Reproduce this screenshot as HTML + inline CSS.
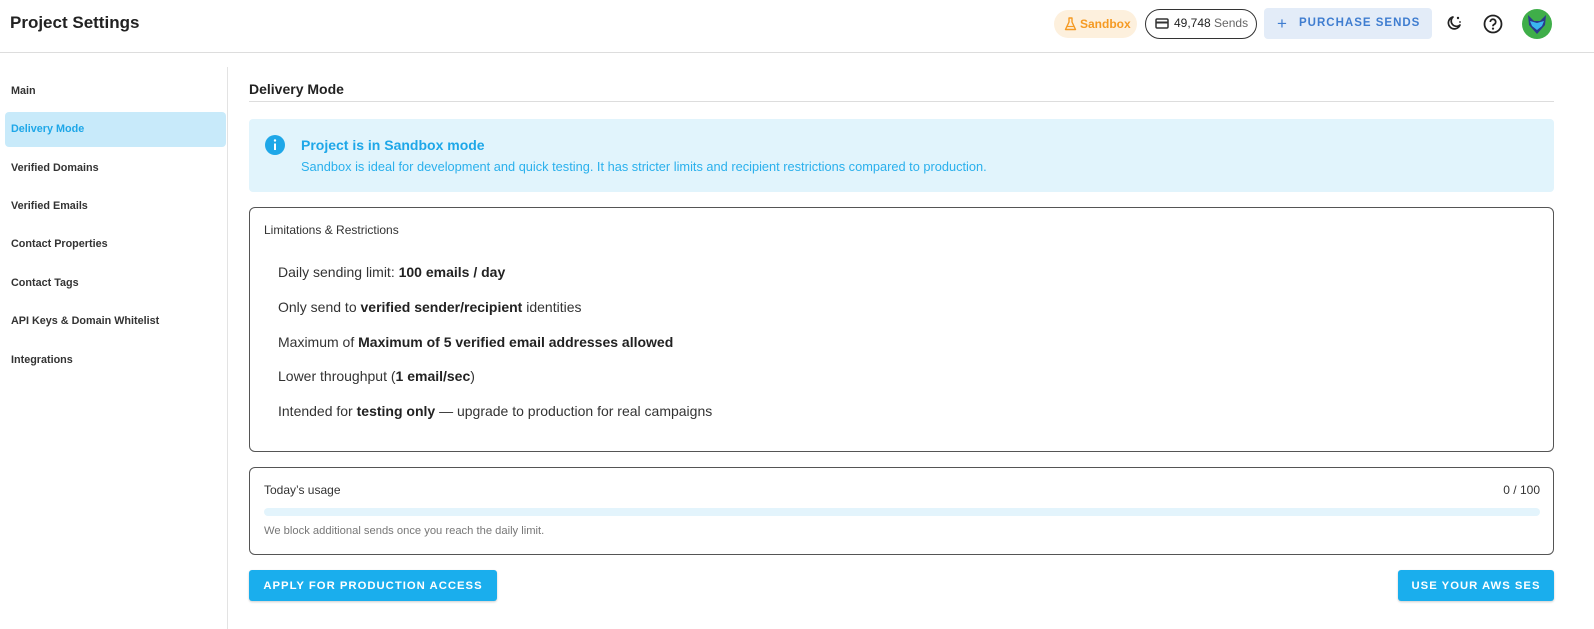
<!DOCTYPE html>
<html><head><meta charset="utf-8"><style>
*{margin:0;padding:0;box-sizing:border-box}
body{width:1594px;height:629px;background:#fff;font-family:"Liberation Sans",sans-serif;color:#222;position:relative;overflow:hidden}
.a{position:absolute;white-space:nowrap}
.side{font-size:10.8px;font-weight:bold;color:#333;left:11px}
.li{left:278px;font-size:14px;color:#333}
.li b{color:#222}
.btn{background:#1aaeed;color:#fff;font-size:11.3px;font-weight:bold;letter-spacing:1px;border-radius:3px;display:flex;align-items:center;justify-content:center;box-shadow:0 1px 2px rgba(0,0,0,.2)}
</style></head><body>
<div class="a" style="left:10px;top:13px;font-size:17px;font-weight:bold;color:#222">Project Settings</div>
<div class="a" style="left:0;top:52px;width:1594px;height:1px;background:#ddd"></div>

<div class="a" style="left:1054px;top:10px;width:83px;height:28px;background:#fdf0dd;border-radius:14px;color:#f59a23;font-size:12px;font-weight:bold;padding-left:26px;line-height:28px">Sandbox
<svg style="position:absolute;left:10px;top:7px" width="13" height="14" viewBox="0 0 13 14"><path d="M4.5 1h4M5 1v4L1.5 12.5h10L8 5V1" fill="none" stroke="#f59a23" stroke-width="1.4" stroke-linejoin="round"/><path d="M3 9.5h7" stroke="#f59a23" stroke-width="1.2"/></svg></div>
<div class="a" style="left:1145px;top:9px;width:112px;height:30px;border:1.5px solid #333;border-radius:15px;font-size:12px;line-height:27px;padding-left:28px;color:#222">49,748 <span style="color:#666">Sends</span>
<svg style="position:absolute;left:9px;top:8px" width="14" height="11" viewBox="0 0 14 11"><rect x="1" y="1" width="12" height="9" rx="1.2" fill="none" stroke="#333" stroke-width="1.5"/><rect x="1" y="3.5" width="12" height="2" fill="#333"/></svg></div>
<div class="a" style="left:1264px;top:8px;width:168px;height:31px;background:#e3ecf8;border-radius:4px;color:#3f7dd0;font-size:11.5px;font-weight:bold;letter-spacing:1px;line-height:31px;padding-left:35px">PURCHASE SENDS
<span style="position:absolute;left:13px;top:0;font-size:17px;font-weight:normal">+</span></div>
<svg class="a" style="left:1445px;top:14px" width="18" height="18" viewBox="0 0 18 18"><path d="M8 3a6 6 0 1 0 7 8 5 5 0 0 1-7-8z" fill="none" stroke="#222" stroke-width="1.7" stroke-linejoin="round"/><circle cx="13" cy="4" r="1.2" fill="#222"/><circle cx="15" cy="8" r="0.9" fill="#222"/></svg>
<svg class="a" style="left:1483px;top:14px" width="20" height="20" viewBox="0 0 20 20"><circle cx="10" cy="10" r="8.5" fill="none" stroke="#222" stroke-width="1.8"/><path d="M7.3 8a2.7 2.7 0 1 1 3.8 2.4c-.8.4-1.1.9-1.1 1.8" fill="none" stroke="#222" stroke-width="1.8"/><circle cx="10" cy="14.6" r="1.1" fill="#222"/></svg>
<svg class="a" style="left:1522px;top:9px" width="30" height="30" viewBox="0 0 30 30"><circle cx="15" cy="15" r="15" fill="#3fae49"/><path d="M6 6l6 6h6l6-6-1 10-8 9-8-9z" fill="#2a3a8c"/><path d="M8 12l7 2 7-2-2 5-5 4-5-4z" fill="#3ab6f0"/></svg>

<div class="a" style="left:227px;top:67px;width:1px;height:562px;background:#e3e3e3"></div>
<div class="a" style="left:5px;top:112px;width:221px;height:35px;background:#c8eafa;border-radius:4px"></div>
<div class="a side" style="top:85px">Main</div>
<div class="a side" style="top:123px;color:#1ea7e8">Delivery Mode</div>
<div class="a side" style="top:162px">Verified Domains</div>
<div class="a side" style="top:200px">Verified Emails</div>
<div class="a side" style="top:238px">Contact Properties</div>
<div class="a side" style="top:277px">Contact Tags</div>
<div class="a side" style="top:315px">API Keys &amp; Domain Whitelist</div>
<div class="a side" style="top:354px">Integrations</div>

<div class="a" style="left:249px;top:81px;font-size:14px;font-weight:bold;color:#222">Delivery Mode</div>
<div class="a" style="left:249px;top:101px;width:1305px;height:1px;background:#ddd"></div>

<div class="a" style="left:249px;top:119px;width:1305px;height:73px;background:#e1f4fc;border-radius:4px"></div>
<svg class="a" style="left:264px;top:134px" width="22" height="22" viewBox="0 0 22 22"><circle cx="11" cy="11" r="10" fill="#1ea7e8"/><rect x="10" y="9.5" width="2" height="6.5" fill="#fff"/><circle cx="11" cy="6.5" r="1.2" fill="#fff"/></svg>
<div class="a" style="left:301px;top:137px;font-size:14px;font-weight:bold;color:#1ea7e8">Project is in Sandbox mode</div>
<div class="a" style="left:301px;top:159px;font-size:12.8px;color:#2ab0ec">Sandbox is ideal for development and quick testing. It has stricter limits and recipient restrictions compared to production.</div>

<div class="a" style="left:249px;top:207px;width:1305px;height:245px;border:1px solid #555;border-radius:6px"></div>
<div class="a" style="left:264px;top:223px;font-size:12px;color:#333;font-weight:500">Limitations &amp; Restrictions</div>
<div class="a li" style="top:264px">Daily sending limit: <b>100 emails / day</b></div>
<div class="a li" style="top:299px">Only send to <b>verified sender/recipient</b> identities</div>
<div class="a li" style="top:334px">Maximum of <b>Maximum of 5 verified email addresses allowed</b></div>
<div class="a li" style="top:368px">Lower throughput (<b>1 email/sec</b>)</div>
<div class="a li" style="top:403px">Intended for <b>testing only</b> — upgrade to production for real campaigns</div>

<div class="a" style="left:249px;top:467px;width:1305px;height:88px;border:1px solid #555;border-radius:6px"></div>
<div class="a" style="left:264px;top:483px;font-size:12px;color:#333">Today’s usage</div>
<div class="a" style="right:54px;top:483px;font-size:12px;color:#333">0 / 100</div>
<div class="a" style="left:264px;top:508px;width:1276px;height:8px;background:#e3f4fc;border-radius:4px"></div>
<div class="a" style="left:264px;top:525px;font-size:11.2px;color:#777">We block additional sends once you reach the daily limit.</div>

<div class="a btn" style="left:249px;top:570px;width:248px;height:31px">APPLY FOR PRODUCTION ACCESS</div>
<div class="a btn" style="left:1398px;top:570px;width:156px;height:31px">USE YOUR AWS SES</div>
</body></html>
